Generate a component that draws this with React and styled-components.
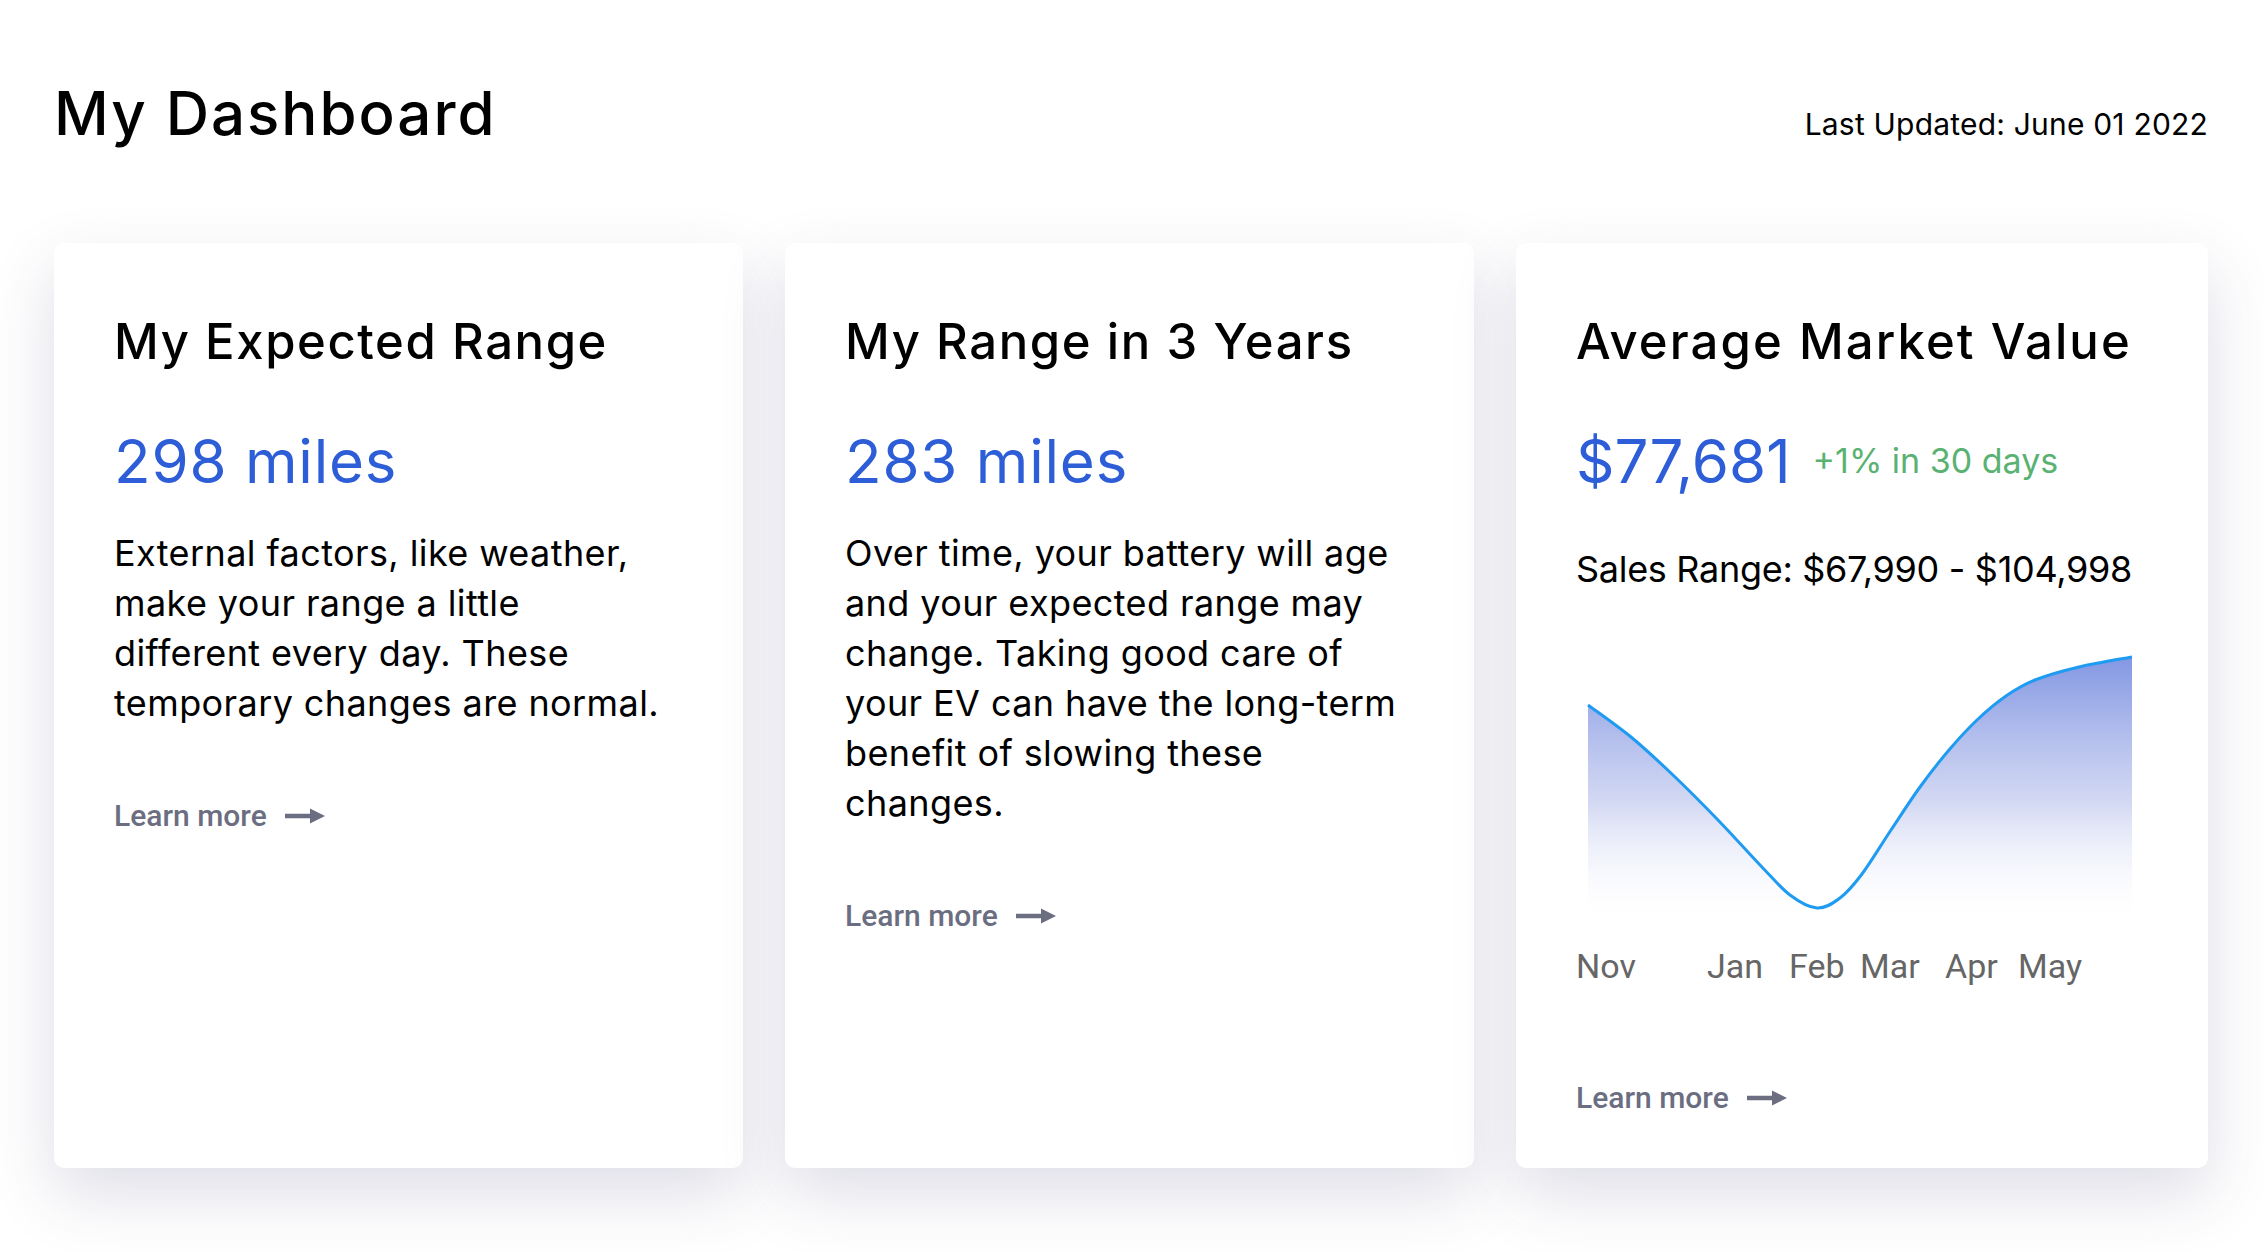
import React from 'react'
import styled, { createGlobalStyle } from 'styled-components'

const GlobalStyle = createGlobalStyle`
  html, body {
    margin: 0;
    padding: 0;
    background: #ffffff;
  }
  * {
    box-sizing: border-box;
  }
`

const Page = styled.main`
  min-height: 100vh;
  padding: 77px 56px 80px 54px;
  font-family: Inter, "Open Sans", sans-serif;
  color: #000;
`

const Header = styled.header`
  display: flex;
  justify-content: space-between;
  align-items: baseline;
  margin-bottom: 94px;
`

const Title = styled.h1`
  margin: 0;
  font-size: 60px;
  line-height: 72px;
  font-weight: 500;
  letter-spacing: 2px;
`

const Updated = styled.span`
  font-size: 30px;
  line-height: 36px;
  font-weight: 400;
  letter-spacing: 0.2px;
`

const Grid = styled.section`
  display: grid;
  grid-template-columns: repeat(3, 1fr);
  gap: 42px;
`

const Card = styled.article`
  display: flex;
  flex-direction: column;
  align-items: flex-start;
  background: #fff;
  border-radius: 10px;
  padding: 70px 60px 52px 60px;
  box-shadow: 0 26px 64px rgba(58, 58, 112, 0.17);
`

const CardTitle = styled.h2`
  margin: 0 0 54px;
  font-size: 49px;
  line-height: 58px;
  font-weight: 500;
  letter-spacing: ${p => (p.$wide ? '2.1px' : '1.6px')};
`

const ValueRow = styled.div`
  display: flex;
  align-items: center;
  gap: 22px;
`

const Value = styled.span`
  font-size: 60px;
  line-height: 72px;
  font-weight: 400;
  letter-spacing: ${p => (p.$tight ? '0' : '0.8px')};
  color: #2d5dd7;
`

const Trend = styled.span`
  font-size: 34px;
  line-height: 40px;
  color: #5ab272;
`

const Body = styled.p`
  margin: 31px 0 0;
  font-size: 36px;
  line-height: 50px;
  font-weight: 400;
  letter-spacing: 0.4px;
`

const SalesRange = styled.p`
  margin: 47px 0 0;
  font-size: 36px;
  line-height: 50px;
  font-weight: 400;
  letter-spacing: -0.3px;
  white-space: nowrap;
`

const LearnMore = styled.a`
  display: inline-flex;
  align-items: center;
  gap: 18px;
  margin-top: ${p => p.$top}px;
  font-family: Roboto, "Liberation Sans", sans-serif;
  font-size: 30px;
  line-height: 36px;
  font-weight: 500;
  color: #6b6e81;
  text-decoration: none;
  cursor: pointer;
`

const ChartBox = styled.div`
  margin-top: 46px;
  width: 100%;
`

const Arrow = () => (
  <svg width="40" height="18" viewBox="0 0 40 18">
    <path d="M0 9 H28" stroke="#6b6e81" strokeWidth="4.5" />
    <polygon points="25,1.5 40,9 25,16.5" fill="#6b6e81" />
  </svg>
)

const points = [
  [12, 65], [55, 97], [98, 136], [142, 180], [185, 226], [214, 255],
  [241, 268], [264, 258], [286, 234], [315, 190], [344, 147], [373, 110],
  [401, 80], [430, 56], [459, 40], [503, 27], [556, 17],
]

const months = [
  { label: 'Nov', x: 0 },
  { label: 'Jan', x: 131 },
  { label: 'Feb', x: 213 },
  { label: 'Mar', x: 284 },
  { label: 'Apr', x: 369 },
  { label: 'May', x: 442 },
]

const smooth = pts => {
  let d = `M${pts[0][0]},${pts[0][1]}`
  for (let i = 0; i < pts.length - 1; i++) {
    const p0 = pts[i - 1] || pts[i]
    const p1 = pts[i]
    const p2 = pts[i + 1]
    const p3 = pts[i + 2] || p2
    const c1x = p1[0] + (p2[0] - p0[0]) / 6
    const c1y = p1[1] + (p2[1] - p0[1]) / 6
    const c2x = p2[0] - (p3[0] - p1[0]) / 6
    const c2y = p2[1] - (p3[1] - p1[1]) / 6
    d += ` C${c1x},${c1y} ${c2x},${c2y} ${p2[0]},${p2[1]}`
  }
  return d
}

const ValueChart = () => {
  const line = smooth(points)
  const last = points[points.length - 1]
  const area = `${line} L${last[0]},284 L${points[0][0]},284 Z`
  return (
    <svg width="572" height="355" viewBox="0 0 572 355">
      <defs>
        <linearGradient id="areaFill" x1="0" y1="0" x2="0" y2="1">
          <stop offset="0%" stopColor="#8397e3" stopOpacity="1" />
          <stop offset="55%" stopColor="#c9d0f0" stopOpacity="0.8" />
          <stop offset="100%" stopColor="#ffffff" stopOpacity="0" />
        </linearGradient>
      </defs>
      <path d={area} fill="url(#areaFill)" />
      <path d={line} fill="none" stroke="#1f9bf2" strokeWidth="3" />
      {months.map(m => (
        <text
          key={m.label}
          x={m.x}
          y="338"
          fontFamily="Roboto, 'Liberation Sans', sans-serif"
          fontSize="34"
          fill="#666666"
        >
          {m.label}
        </text>
      ))}
    </svg>
  )
}

const App = () => {
  return (
    <Page>
      <GlobalStyle />
      <Header>
        <Title>My Dashboard</Title>
        <Updated>Last Updated: June 01 2022</Updated>
      </Header>
      <Grid>
        <Card>
          <CardTitle>My Expected Range</CardTitle>
          <Value>298 miles</Value>
          <Body>
            External factors, like weather,<br />
            make your range a little<br />
            different every day. These<br />
            temporary changes are normal.
          </Body>
          <LearnMore $top={70}>
            Learn more <Arrow />
          </LearnMore>
        </Card>
        <Card>
          <CardTitle>My Range in 3 Years</CardTitle>
          <Value>283 miles</Value>
          <Body>
            Over time, your battery will age<br />
            and your expected range may<br />
            change. Taking good care of<br />
            your EV can have the long-term<br />
            benefit of slowing these<br />
            changes.
          </Body>
          <LearnMore $top={70}>
            Learn more <Arrow />
          </LearnMore>
        </Card>
        <Card>
          <CardTitle $wide>Average Market Value</CardTitle>
          <ValueRow>
            <Value $tight>$77,681</Value>
            <Trend>+1% in 30 days</Trend>
          </ValueRow>
          <SalesRange>Sales Range: $67,990 - $104,998</SalesRange>
          <ChartBox>
            <ValueChart />
          </ChartBox>
          <LearnMore $top={81}>
            Learn more <Arrow />
          </LearnMore>
        </Card>
      </Grid>
    </Page>
  )
}

export default App
